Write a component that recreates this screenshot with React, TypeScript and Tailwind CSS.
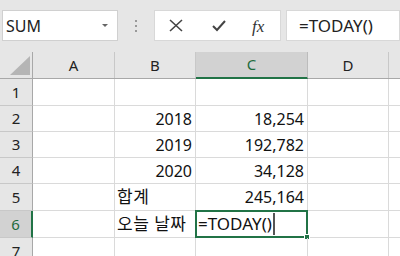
import React from "react";

const font = { fontFamily: '"Noto Sans", "Noto Sans CJK KR", sans-serif' };

const cols = [
  { key: "A", w: "w-[82px]" },
  { key: "B", w: "w-[81px]" },
  { key: "C", w: "w-[112px]" },
  { key: "D", w: "w-[81px]" },
];

const rows: { n: number; h: string; b?: string; c?: string; bKo?: boolean }[] = [
  { n: 1, h: "h-[27px]" },
  { n: 2, h: "h-[26px]", b: "2018", c: "18,254" },
  { n: 3, h: "h-[26px]", b: "2019", c: "192,782" },
  { n: 4, h: "h-[26px]", b: "2020", c: "34,128" },
  { n: 5, h: "h-[27px]", b: "합계", c: "245,164", bKo: true },
  { n: 6, h: "h-[27px]", b: "오늘 날짜", bKo: true },
  { n: 7, h: "h-[27px]" },
];

function Toolbar() {
  return (
    <div className="h-[52px] bg-[#e6e6e6] flex items-start pt-[10px]">
      <div className="ml-[2px] w-[116px] h-[31px] bg-white border border-[#d0d0d0] flex items-center justify-between pl-[3px] pr-[9px]">
        <span className="text-[16px] text-[#222]">SUM</span>
        <svg width="6" height="3" viewBox="0 0 6 3">
          <path d="M0 0 L6 0 L3 3 Z" fill="#666" />
        </svg>
      </div>
      <div className="w-[36px] h-[31px] flex flex-col items-center justify-center gap-[3px]">
        <span className="w-[2px] h-[2px] bg-[#999]" />
        <span className="w-[2px] h-[2px] bg-[#999]" />
        <span className="w-[2px] h-[2px] bg-[#999]" />
      </div>
      <div className="w-[127px] h-[31px] bg-white border border-[#d8d8d8] relative">
        <svg className="absolute left-[14px] top-[8px]" width="14" height="13" viewBox="0 0 14 13">
          <path d="M1 1 L13 12 M13 1 L1 12" stroke="#444" strokeWidth="1.6" fill="none" />
        </svg>
        <svg className="absolute left-[57px] top-[9px]" width="14" height="12" viewBox="0 0 14 12">
          <path d="M1 6 L5 10 L13 1" stroke="#444" strokeWidth="2" fill="none" />
        </svg>
        <span
          className="absolute left-[97px] top-[3px] italic text-[17px] text-[#333]"
          style={{ fontFamily: '"Liberation Serif", serif' }}
        >
          fx
        </span>
      </div>
      <div className="ml-[5px] flex-1 h-[31px] bg-white border border-[#d8d8d8] flex items-center pl-[12px]">
        <span className="text-[17px] text-[#222]">=TODAY()</span>
      </div>
    </div>
  );
}

export default function App() {
  return (
    <div className="w-[400px] h-[256px] overflow-hidden bg-white" style={font}>
      <Toolbar />
      <div className="flex h-[27px] bg-[#e6e6e6] border-b border-[#a8a8a8]">
        <div className="w-[33px] border-r border-[#a8a8a8] relative">
          <svg className="absolute left-[10px] top-[4px]" width="20" height="19" viewBox="0 0 20 19">
            <path d="M20 0 L20 19 L0 19 Z" fill="#b5b5b5" />
          </svg>
        </div>
        {cols.map((c) => (
          <div
            key={c.key}
            className={`${c.w} flex items-center justify-center text-[15px] ${
              c.key === "C"
                ? "bg-[#d2d2d2] text-[#1e6b3c] border-b-2 border-[#217346] -mb-px border-r border-r-[#bcbcbc]"
                : "text-[#222] border-r border-[#c8c8c8]"
            }`}
          >
            {c.key}
          </div>
        ))}
        <div className="flex-1" />
      </div>
      {rows.map((r) => (
        <div key={r.n} className={`flex ${r.h} border-b border-[#dadada] shrink-0`}>
          <div
            className={`w-[33px] flex items-center justify-center text-[15px] ${
              r.n === 6
                ? "bg-[#d2d2d2] text-[#1e6b3c] border-r-2 border-[#217346] border-b border-b-[#c8c8c8] -mb-px"
                : "bg-[#e6e6e6] text-[#222] border-r border-[#a8a8a8] border-b border-b-[#c8c8c8] -mb-px"
            }`}
          >
            {r.n}
          </div>
          <div className="w-[82px] border-r border-[#dadada]" />
          <div
            className={`w-[81px] border-r border-[#dadada] flex items-center text-[#111] whitespace-nowrap ${
              r.bKo ? "justify-start pl-[2px] text-[17px] tracking-[0.5px]" : "justify-end pr-[3px] text-[16px]"
            }`}
          >
            {r.b}
          </div>
          <div className="w-[112px] border-r border-[#dadada] flex items-center justify-end pr-[3px] text-[16px] text-[#111] relative">
            {r.c}
            {r.n === 6 && (
              <div className="absolute -left-px -top-px -right-px -bottom-px border-2 border-[#217346] flex items-center pl-[1px]">
                <span className="text-[17px] text-[#111]">=TODAY()</span>
                <span className="w-[2px] h-[22px] bg-[#555] ml-[1px]" />
                <div className="absolute -right-[4px] -bottom-[4px] w-[6px] h-[6px] bg-[#217346] border border-white" />
              </div>
            )}
          </div>
          <div className="w-[81px] border-r border-[#dadada]" />
          <div className="flex-1" />
        </div>
      ))}
    </div>
  );
}
